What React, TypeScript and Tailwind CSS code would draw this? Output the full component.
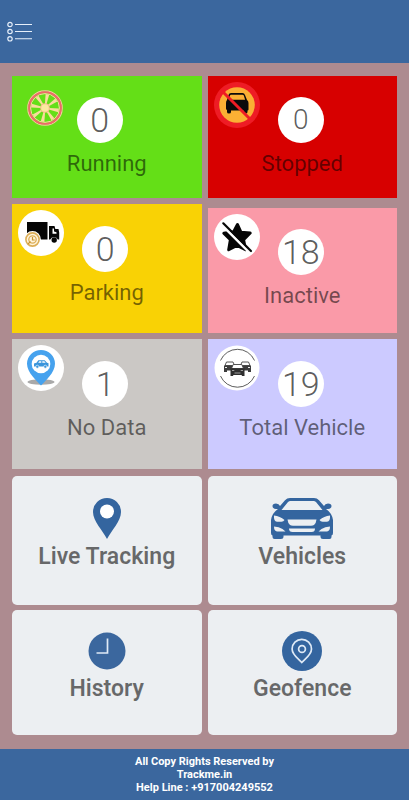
import type { ReactNode } from 'react';
import { clsx } from 'clsx';

const WheelIcon = () => (
  <svg viewBox="0 0 36 36" className="w-9 h-9" aria-hidden="true">
    <circle cx="18" cy="18" r="17.2" fill="none" stroke="#f6c9a0" strokeWidth="1.2" />
    <circle cx="18" cy="18" r="15.8" fill="none" stroke="#f0686a" strokeWidth="2" />
    <circle cx="18" cy="18" r="14.4" fill="none" stroke="#f9dc9c" strokeWidth="1" />
    {[0, 45, 90, 135, 180, 225, 270, 315].map((angle) => (
      <path
        key={angle}
        transform={`rotate(${angle + 10} 18 18)`}
        d="M17.200 14 16.200 4.200h3.600L18.800 14z"
        fill="#f9dc9c"
      />
    ))}
    <circle cx="18" cy="18" r="4.800" fill="#f7b98a" />
    <circle cx="18" cy="18" r="3.800" fill="#fbe9a0" />
  </svg>
);

const NoCarIcon = () => (
  <svg viewBox="0 0 46 46" className="w-[46px] h-[46px]" aria-hidden="true">
    <circle cx="23" cy="23" r="23" fill="#ee1c25" />
    <circle cx="23" cy="23" r="17.8" fill="#fbb034" />
    <path
      d="M14.500 13q.6-2 2.500-2h11.500q1.800 0 2.500 2l2 5q1.500 1 1.500 3v6.500q0 1-1 1V30q0 1.500-2 1.500t-2-1.500v-1.500H17V30q0 1.500-2 1.500T13 30v-2q-1-.5-1-1.500V21q0-2 1-3z"
      fill="#0b0b0b"
    />
    <path d="M17 12.700h11.500q1 0 1.300.8l1.300 4.300H14.800l1.200-4.300q.2-.8 1-.8z" fill="#fbb034" />
    <path d="m8.500 9.500 27 27" stroke="#ee1c25" strokeWidth="3" />
  </svg>
);

const TruckIcon = () => (
  <svg viewBox="0 0 46 46" className="w-[46px] h-[46px]" aria-hidden="true">
    <circle cx="23" cy="23" r="23" fill="#fff" />
    <path d="M9 12h20.500v17.500H9z" fill="#050505" />
    <path
      d="M31 16h5.500l.8 3h3.200l.7 3.500v7h-1.400a4 4 0 0 0-7.500 0H31z"
      fill="#050505"
    />
    <path d="M34.500 18.500h1.500v3l2.500.8v1.500h-4z" fill="#fff" />
    <circle cx="36.200" cy="30" r="2.700" fill="#050505" />
    <circle cx="14.500" cy="29.500" r="8.400" fill="#fff" />
    <circle cx="14.500" cy="29.500" r="6.600" fill="#fff4dc" stroke="#dcae57" strokeWidth="1.600" />
    <circle cx="14.500" cy="29.500" r="3.700" fill="none" stroke="#dcae57" strokeWidth="1.300" />
    <path d="M14.500 27v3h2.200M10 34l2.500-2.500" fill="none" stroke="#c99331" strokeWidth="1.200" />
  </svg>
);

const StarOffIcon = () => (
  <svg viewBox="0 0 46 46" className="w-[46px] h-[46px]" aria-hidden="true">
    <circle cx="23" cy="23" r="23" fill="#fff" />
    <path
      d="m23.500 10.500 3.400 7.700 9.300.8-6.600 6.700 1.900 10-8.500-4.200-8.300 4.200 1.700-9.900-6.600-6.600 9.900-1.400z"
      fill="#050505"
      stroke="#050505"
      strokeWidth="3"
      strokeLinejoin="round"
    />
    <path d="m8 11 29 29" stroke="#fff" strokeWidth="2.600" />
    <path d="M9.300 9.300 37 37" stroke="#050505" strokeWidth="2.200" strokeLinecap="round" />
  </svg>
);

const CarPinIcon = () => (
  <svg viewBox="0 0 46 46" className="w-[46px] h-[46px]" aria-hidden="true">
    <circle cx="23" cy="23" r="23" fill="#fff" />
    <ellipse cx="23" cy="37" rx="13.500" ry="2.800" fill="#a9a9a9" />
    <path
      d="M23 40.500C19 36.500 9 27.500 9 18.800a14 13.800 0 0 1 28 0C37 27.500 27 36.500 23 40.500z"
      fill="#46a2ee"
    />
    <circle cx="23" cy="19" r="9.300" fill="#fff" />
    <path
      d="M16 21.500v-3l2.500-.8 1.800-2.400h6.400l2.300 2.500 1.500.5v3.200z"
      fill="#3a95dc"
    />
    <path d="M20.200 17.800 21.300 16.300h2v1.500zM24.300 16.300h2l1.400 1.500h-3.400z" fill="#fff" />
    <circle cx="19.300" cy="21.700" r="1.500" fill="#3a95dc" stroke="#fff" strokeWidth=".6" />
    <circle cx="27.300" cy="21.700" r="1.500" fill="#3a95dc" stroke="#fff" strokeWidth=".6" />
  </svg>
);

const FleetIcon = () => (
  <svg viewBox="0 0 46 46" className="w-[46px] h-[46px]" aria-hidden="true">
    <circle cx="23" cy="23" r="22.500" fill="#fff" />
    <path
      d="M6.500 15.500a18.500 18.500 0 0 1 34 0M6.500 31a18.500 18.500 0 0 0 34 0"
      fill="none"
      stroke="#333"
      strokeWidth=".8"
    />
    <g fill="#fff" stroke="#444" strokeWidth=".9">
      <path d="m11 20.500 1.500-3.500h6.500l1.500 3.500zM26.500 20.500 28 17h6.500l1.500 3.500z" />
    </g>
    <path
      d="M10 20.500h9v5h-6V27h-3zM28 20.500h9V27h-3v-1.500h-6z"
      fill="#3c3c3c"
    />
    <path d="m17.500 23.500 1.700-4h8.600l1.700 4z" fill="#fff" stroke="#444" strokeWidth=".9" />
    <path d="M16.500 23.300h14V31h-2.700v-1h-8.600v1h-2.700z" fill="#2f2f2f" />
    <path d="M18 25.500h2.300M26.700 25.500H29M20.500 28h6" stroke="#bbb" strokeWidth=".8" />
    <path d="M11 22.500h2M34 22.500h2" stroke="#eee" strokeWidth="1" />
  </svg>
);

const PinIcon = () => (
  <svg viewBox="0 0 28 41" className="w-7 h-[41px]" aria-hidden="true">
    <path d="M14 41C10 33 0 23 0 14a14 14 0 0 1 28 0c0 9-10 19-14 27z" fill="#34659f" />
    <circle cx="14" cy="13.500" r="7" fill="#fff" />
  </svg>
);

const CarIcon = () => (
  <svg viewBox="0 0 62 41" className="w-[62px] h-[41px]" aria-hidden="true">
    <path
      d="M19 0h24q3 0 5 2.300L53 8q1-2.500 4-2.500 3.500 0 3.500 2.500T57 11h-2q6 4 7 11v13q0 2-1.500 2.500V39q0 2-2 2H52q-2.500 0-2.500-2v-1.500h-37V39q0 2-2.500 2H3.500q-2 0-2-2v-1.500Q0 37 0 35V22q1-7 7-11H5Q1.500 10.500 1.500 8T5 5.500Q8 5.500 9 8l5-5.700Q16 0 19 0z"
      fill="#34659f"
    />
    <g fill="#eceff2">
      <path d="M19.500 3h23q1.500 0 2.700 1.300l6.300 7.700h-41L16.800 4.300q1.200-1.300 2.700-1.300z" />
      <path d="M3 17.500q6 .5 10.500 4.500-1 1.800-3 1.800H6Q2.500 23.300 3 17.500zM59 17.500q-6 .5-10.500 4.500 1 1.800 3 1.800H56q3.500-.5 3-6.300z" />
      <path d="M16.500 21.500h29q-.3 3.500-2.500 5.500-1 .7-3 .7H22q-2 0-3-.7-2.200-2-2.500-5.500z" />
      <path d="M3 28.500q5 .3 8.500 2.500l3 2.500H6q-3-.5-3-5zM59 28.500q-5 .3-8.500 2.500l-3 2.500H56q3-.5 3-5z" />
      <path d="M18 30.500h26q0 3.500-3.500 3.500h-19Q18 34 18 30.500z" />
    </g>
  </svg>
);

const ClockIcon = () => (
  <svg viewBox="0 0 40 40" className="w-10 h-10" aria-hidden="true">
    <circle cx="20" cy="20" r="18.500" fill="#3b679e" />
    <path d="M20.500 7.500v14.500h-11" fill="none" stroke="#dfeaf6" strokeWidth="1.700" />
  </svg>
);

const GeofenceIcon = () => (
  <svg viewBox="0 0 40 40" className="w-10 h-10" aria-hidden="true">
    <circle cx="20" cy="20" r="20" fill="#34659f" />
    <path
      d="M19.800 31.500c-3-3.500-9.700-7.500-9.700-13.500a9.700 9.700 0 0 1 19.400 0c0 6-6.700 10-9.700 13.500z"
      fill="none"
      stroke="#dfeaf6"
      strokeWidth="1.700"
    />
    <circle cx="20" cy="18" r="3.400" fill="none" stroke="#dfeaf6" strokeWidth="1.700" />
  </svg>
);

interface StatusCardProps {
  label: string;
  count: number;
  icon: ReactNode;
  className?: string;
  iconClass?: string;
  countClass?: string;
}

const StatusCard = ({
  label,
  count,
  icon,
  className,
  iconClass = 'left-1.5 top-1.5',
  countClass = 'mr-[3px] text-[34px]',
}: StatusCardProps) => (
  <button type="button" className={clsx('relative flex flex-col items-center', className)}>
    <span className={clsx('absolute', iconClass)}>{icon}</span>
    <span
      className={clsx(
        'flex items-center justify-center w-[46px] h-[46px] rounded-full bg-white font-light text-black/65',
        countClass
      )}
    >
      {count}
    </span>
    <span className="mt-2 text-[22px] leading-[26px] text-black/54">{label}</span>
  </button>
);

interface MenuCardProps {
  label: string;
  icon: ReactNode;
  className?: string;
}

const MenuCard = ({ label, icon, className }: MenuCardProps) => (
  <button
    type="button"
    className={clsx('flex flex-col items-center rounded-[5px] bg-[#eceff2]', className)}
  >
    {icon}
    <span className="mt-[5px] text-[23px] leading-[26px] font-semibold text-black/56">{label}</span>
  </button>
);

const App = () => {
  return (
    <div className="flex flex-col min-h-screen bg-[#ad8b90] font-['Roboto',sans-serif]">
      <header className="flex px-[7px] py-5 bg-[#3b679e]">
        <button type="button" aria-label="Menu">
          <svg viewBox="0 0 26 23" className="w-[26px] h-[23px]" fill="none" stroke="#e6effa">
            <g strokeWidth="1.200">
              <circle cx="3" cy="4.500" r="2.200" />
              <circle cx="3" cy="11.500" r="2.200" />
              <circle cx="3" cy="18.800" r="2.200" />
            </g>
            <path d="M8 4.500h17M8 11.500h17M8 18.800h17" strokeWidth="1.100" />
          </svg>
        </button>
      </header>

      <main className="flex-1 px-3 pt-[13px] pb-[14px]">
        <section className="grid grid-cols-2 gap-1.5">
          <StatusCard
            label="Running"
            count={0}
            icon={<WheelIcon />}
            className="bg-[#64df17] pt-[21px] pb-[21px]"
            iconClass="left-[15px] top-[14px]"
            countClass="mr-[14px] text-[34px]"
          />
          <StatusCard
            label="Stopped"
            count={0}
            icon={<NoCarIcon />}
            className="bg-[#d70000] pt-[21px] pb-[21px]"
            countClass="mr-[3px] text-[28px]"
          />
          <StatusCard
            label="Parking"
            count={0}
            icon={<TruckIcon />}
            className="bg-[#f9d205] pt-[22px] pb-[27px]"
          />
          <StatusCard
            label="Inactive"
            count={18}
            icon={<StarOffIcon />}
            className="mt-1 bg-[#fa9aa8] pt-[21px] pb-6"
          />
          <StatusCard
            label="No Data"
            count={1}
            icon={<CarPinIcon />}
            className="bg-[#cbc8c5] pt-[22px] pb-7"
          />
          <StatusCard
            label="Total Vehicle"
            count={19}
            icon={<FleetIcon />}
            className="bg-[#cccaff] pt-[22px] pb-7"
          />
        </section>

        <section className="grid grid-cols-2 gap-x-1.5 gap-y-[5px] mt-[7px]">
          <MenuCard label="Live Tracking" icon={<PinIcon />} className="pt-[22px] pb-[35px]" />
          <MenuCard label="Vehicles" icon={<CarIcon />} className="pt-[22px] pb-[35px]" />
          <MenuCard label="History" icon={<ClockIcon />} className="pt-[21px] pb-[33px]" />
          <MenuCard label="Geofence" icon={<GeofenceIcon />} className="pt-[21px] pb-[33px]" />
        </section>
      </main>

      <footer className="py-1.5 bg-[#3b679e] text-center text-[11px] leading-[13px] font-bold text-white">
        <p>All Copy Rights Reserved by</p>
        <p>Trackme.in</p>
        <p>Help Line : +917004249552</p>
      </footer>
    </div>
  );
};

export default App;
